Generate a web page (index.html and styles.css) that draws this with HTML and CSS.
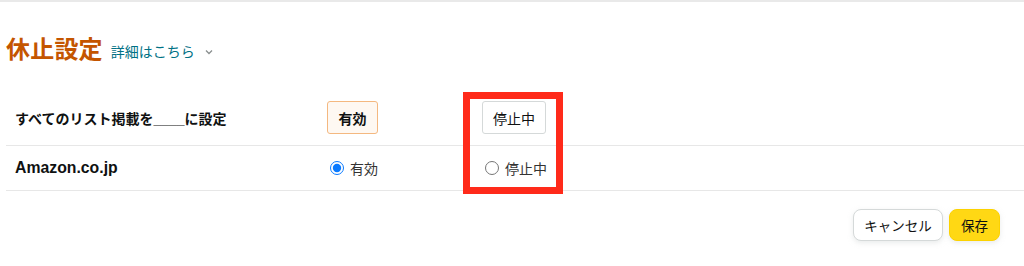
FILE: index.html
```html
<!DOCTYPE html>
<html lang="ja">
<head>
    <meta charset="UTF-8">
    <meta name="viewport" content="width=device-width, initial-scale=1.0">
    <title>休止設定</title>
    <link rel="stylesheet" href="styles.css">
</head>
<body>

<div class="page">
    <div class="header">
        <h2>休止設定</h2>
        <a href="#" class="detalhe">詳細はこちら</a>
        <span class="chevron">
            <svg width="8" height="6" viewBox="0 0 8 6"><path d="M1 1.5 L4 4.5 L7 1.5" fill="none" stroke="#8a8f8f" stroke-width="1.3"/></svg>
        </span>
    </div>

    <div class="tabela">
        <div class="row topo">
            <div class="label">すべてのリスト掲載を____に設定</div>
            <div class="cell"><button class="btn ativo">有効</button></div>
            <div class="cell"><button class="btn">停止中</button></div>
        </div>
        <div class="row">
            <div class="label loja">Amazon.co.jp</div>
            <div class="cell"><label class="opcao"><input type="radio" name="amazon" checked> 有効</label></div>
            <div class="cell"><label class="opcao"><input type="radio" name="amazon"> 停止中</label></div>
        </div>
    </div>

    <div class="acoes">
        <button class="btn-acao cancelar">キャンセル</button>
        <button class="btn-acao salvar">保存</button>
    </div>

    <div class="destaque"></div>
</div>

</body>
</html>
```

FILE: styles.css
```css
body {
    margin: 0;
    padding: 0;
    background-color: #fff;
    color: #0f1111;
    font-family: "Liberation Sans", "Noto Sans CJK JP", sans-serif;
}
.page {
    position: relative;
    border-top: 2px solid #e9e9e9;
    padding-left: 6px;
    height: 264px;
}
.header {
    display: flex;
    align-items: center;
    padding-top: 34px;
    height: 28px;
}
.header h2 {
    margin: 0;
    font-size: 24px;
    line-height: 28px;
    font-weight: bold;
    color: #c45500;
    letter-spacing: 0.2px;
}
.detalhe {
    margin-left: 8px;
    margin-top: 2px;
    font-size: 14px;
    color: #007185;
    text-decoration: none;
}
.chevron {
    display: flex;
    margin-left: 10px;
    margin-top: 3px;
}
.tabela {
    margin-top: 26px;
}
.row {
    display: grid;
    grid-template-columns: 312px 155px 1fr;
    align-items: center;
    padding-left: 9px;
    height: 44px;
    border-bottom: 1px solid #e7e7e7;
}
.row.topo {
    height: 55px;
}
.label {
    font-size: 14px;
    font-weight: bold;
}
.label.loja {
    font-size: 15.8px;
}
.btn {
    font-family: inherit;
    font-size: 14px;
    color: #0f1111;
    background-color: #fff;
    border: 1px solid #d5d9d9;
    border-radius: 3px;
    height: 33px;
    width: 64px;
    padding: 0;
    white-space: nowrap;
    cursor: pointer;
}
.btn.ativo {
    font-weight: bold;
    background-color: #fef8f2;
    border-color: #f4b880;
    width: 51px;
}
.opcao {
    display: flex;
    align-items: center;
    font-size: 14px;
    color: #333;
}
.opcao input {
    width: 14px;
    height: 14px;
    margin: 0 6px 0 3px;
    accent-color: #0a7aff;
}
.acoes {
    display: flex;
    justify-content: flex-end;
    gap: 6px;
    margin-top: 18px;
    padding-right: 24px;
}
.btn-acao {
    font-family: inherit;
    font-size: 13.5px;
    color: #0f1111;
    height: 32px;
    border-radius: 8px;
    padding: 0;
    white-space: nowrap;
    cursor: pointer;
}
.cancelar {
    background-color: #fff;
    border: 1px solid #d5d9d9;
    box-shadow: 0 2px 5px rgba(213, 217, 217, 0.5);
    width: 90px;
}
.salvar {
    background-color: #ffd814;
    border: 1px solid #fcd200;
    box-shadow: 0 2px 5px rgba(213, 217, 217, 0.5);
    width: 51px;
}

/* marcação vermelha */
.destaque {
    position: absolute;
    left: 463px;
    top: 90px;
    width: 86px;
    height: 88px;
    border: 7px solid #ff2a1a;
}
```
